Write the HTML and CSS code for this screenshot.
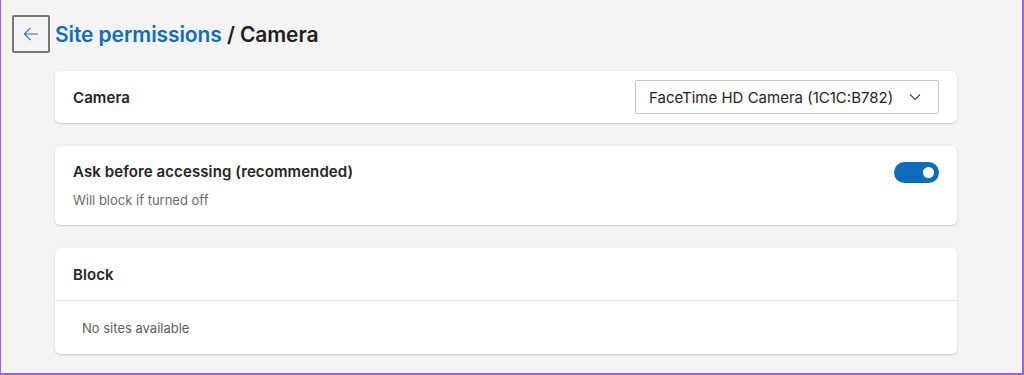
FILE: index.html
```html
<!DOCTYPE html>
<html>
<head>
<meta charset="utf-8">
<link rel="stylesheet" href="styles.css">
</head>
<body>
<div class="frame">
  <header class="head">
    <button class="back" aria-label="Back">
      <svg width="20" height="20" viewBox="0 0 20 20"><path d="M17 10H3.5M9.5 3.8L3.3 10l6.2 6.2" fill="none" stroke="#1a73c9" stroke-width="1.1"/></svg>
    </button>
    <h1 class="title"><span class="crumb">Site permissions</span> / Camera</h1>
  </header>
  <main class="content">
    <section class="card row">
      <div class="label">Camera</div>
      <div class="select">
        <span>FaceTime HD Camera (1C1C:B782)</span>
        <svg width="14" height="14" viewBox="0 0 14 14"><path d="M2 4.5l5 5 5-5" fill="none" stroke="#444" stroke-width="1.1"/></svg>
      </div>
    </section>
    <section class="card ask">
      <div class="ask-text">
        <div class="label">Ask before accessing (recommended)</div>
        <div class="sub">Will block if turned off</div>
      </div>
      <div class="toggle"><span class="knob"></span></div>
    </section>
    <section class="card block">
      <div class="block-head"><div class="label">Block</div></div>
      <div class="block-body">No sites available</div>
    </section>
  </main>
</div>
</body>
</html>
```

FILE: styles.css
```css
* { box-sizing: border-box; }
html, body { margin: 0; padding: 0; }
body {
  width: 1024px;
  height: 375px;
  background: #f3f3f3;
  font-family: Inter, "Noto Sans", sans-serif;
  color: #1b1b1b;
}
.frame {
  height: 375px;
  border-left: 1px solid #a35cf0;
  border-right: 2px solid #a35cf0;
  border-bottom: 2px solid #a35cf0;
  padding: 15px 0 0 11px;
  background: #f4f4f4;
}
.head {
  display: flex;
  align-items: center;
  gap: 5px;
  height: 38px;
}
.back {
  width: 38px;
  height: 38px;
  border: 2px solid #767676;
  border-radius: 2px;
  background: transparent;
  display: flex;
  align-items: center;
  justify-content: center;
  padding: 0;
}
.title {
  margin: 0;
  font-size: 21px;
  font-weight: 600;
  letter-spacing: -0.1px;
  color: #1f1f1f;
}
.crumb { color: #0f6cbd; }
.content {
  margin-left: 43px;
  width: 902px;
  margin-top: 18px;
  display: flex;
  flex-direction: column;
  gap: 23px;
}
.card {
  background: #fff;
  border-radius: 5px;
  box-shadow: 0 1px 2px rgba(0,0,0,0.16), 0 0 1px rgba(0,0,0,0.08);
}
.label {
  font-size: 15px;
  font-weight: 600;
  letter-spacing: 0.1px;
  color: #242424;
}
.row {
  height: 52px;
  display: flex;
  align-items: center;
  justify-content: space-between;
  padding: 0 18px;
}
.select {
  width: 304px;
  height: 34px;
  border: 1px solid #c8c8c8;
  border-radius: 2px;
  display: flex;
  align-items: center;
  justify-content: space-between;
  padding: 0 16px 0 13px;
  font-size: 15px;
  color: #242424;
}
.ask {
  height: 79px;
  display: flex;
  justify-content: space-between;
  padding: 16px 18px 0 18px;
}
.sub {
  margin-top: 11px;
  font-size: 13px;
  color: #6b6b6b;
}
.toggle {
  width: 45px;
  height: 21px;
  border-radius: 11px;
  background: #0f6cbd;
  display: flex;
  align-items: center;
  justify-content: flex-end;
  padding-right: 5px;
}
.knob {
  width: 11px;
  height: 11px;
  border-radius: 50%;
  background: #fff;
}
.block { height: 106px; }
.block-head {
  height: 53px;
  display: flex;
  align-items: center;
  padding: 0 18px;
  border-bottom: 1px solid #e6e6e6;
}
.block-body {
  height: 53px;
  display: flex;
  align-items: center;
  padding: 0 27px;
  font-size: 13px;
  color: #606060;
}
```
